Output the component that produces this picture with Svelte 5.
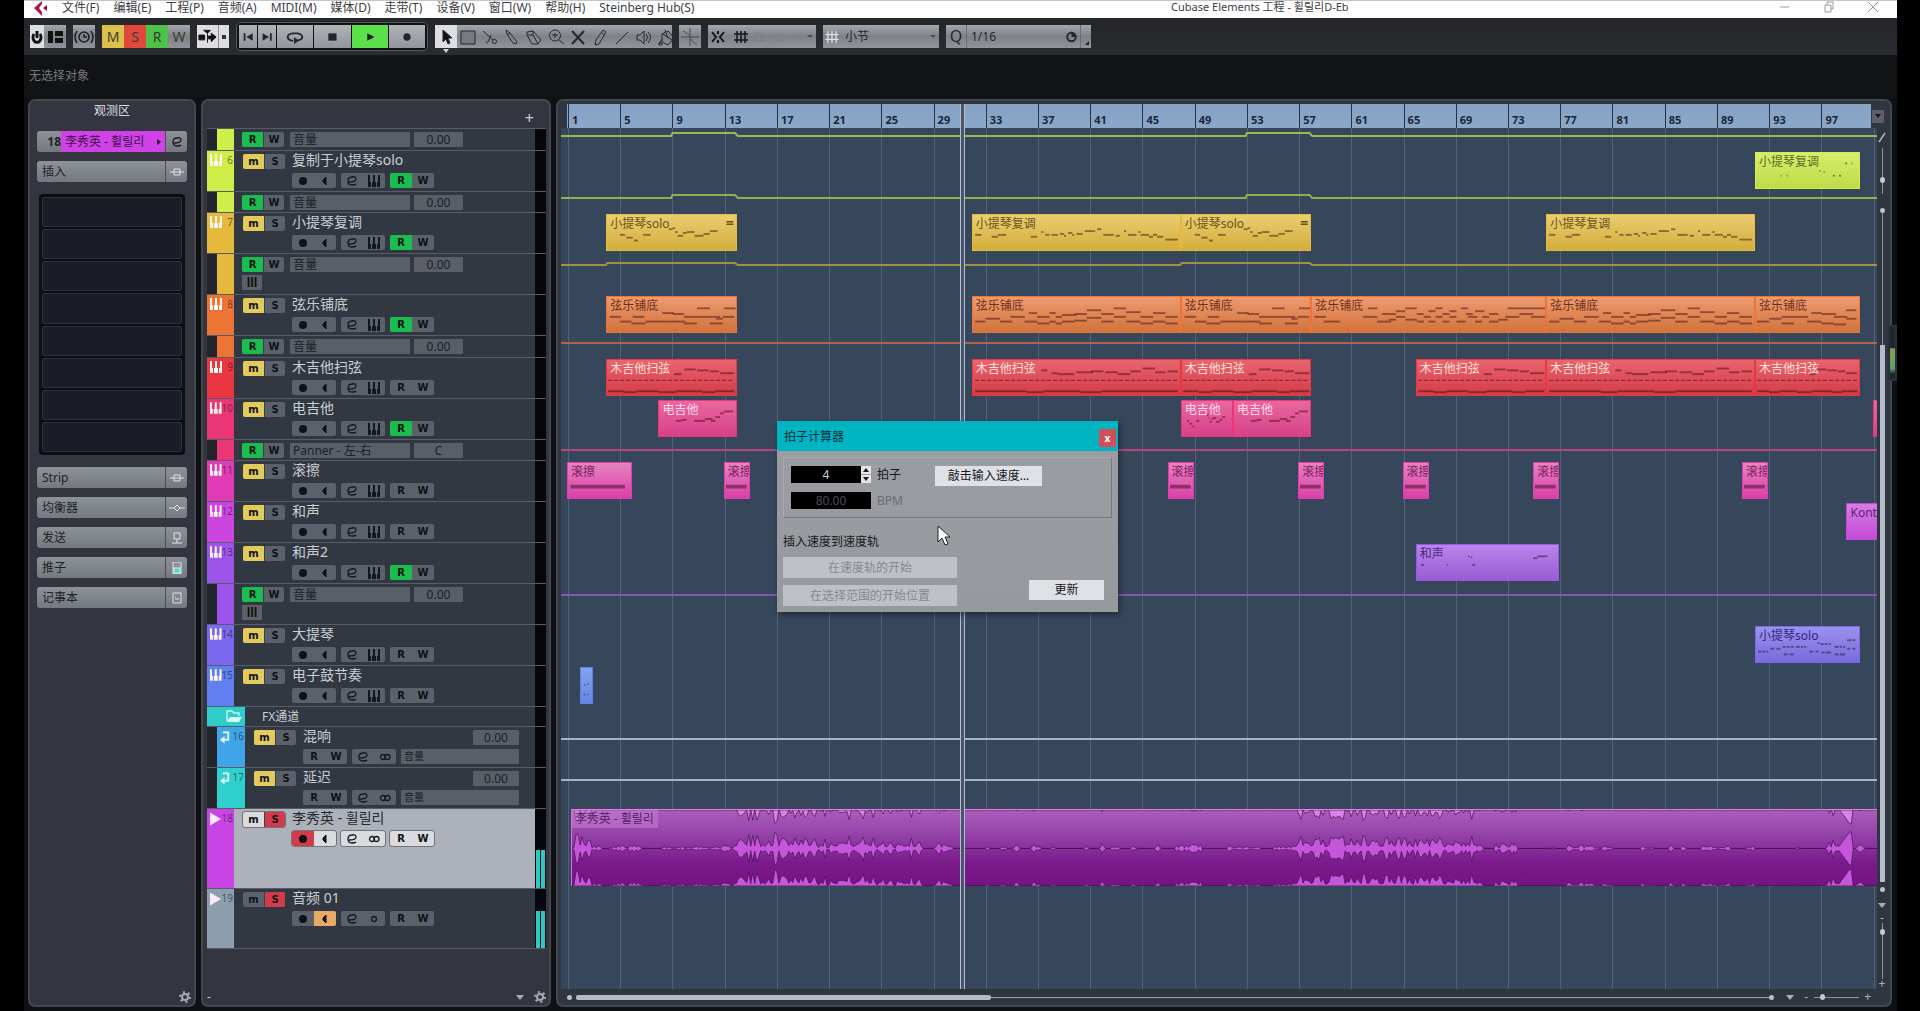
<script lang="ts">
  type Note = [number, number, number]
  type Clip = { from: number; to: number; name: string; notes?: string }
  type Auto = { y: number; color: string; raised?: [number, number][]; lift?: number }
  type Row = {
    kind: 'auto' | 'midi' | 'folder' | 'fx' | 'audio'
    height: number
    color: string
    num?: number
    name?: string
    value?: string
    read?: boolean
    lanes?: boolean
    selected?: boolean
    monitor?: boolean
    stereo?: boolean
    meter?: number
    ink?: string
    tint?: [string, string]
    clips?: Clip[]
    line?: Auto
  }

  const menus = [
    '文件(F)', '编辑(E)', '工程(P)', '音频(A)', 'MIDI(M)', '媒体(D)',
    '走带(T)', '设备(V)', '窗口(W)', '帮助(H)', 'Steinberg Hub(S)',
  ]

  const tools = [
    { id: '选择', d: 'M8 4v12l3-3 2 5 2-1-2-5h4z', fill: true },
    { id: '范围', d: 'M4 5h14v13H4z', fill: false },
    { id: '剪刀', d: 'M4 5l10 9M12 9l-3 7M14 14a2 2 0 1 0 3 3 2 2 0 0 0-3-3M8 15a1 1 0 1 0 1 2', fill: false },
    { id: '胶水', d: 'M5 4l4 3 7 9-1 2-3-1-6-9zM9 7l-3 2', fill: false },
    { id: '橡皮', d: 'M4 6l6-1 8 9-3 4H9L4 9zM4 9h6l5 9M10 9l0-4', fill: false },
    { id: '缩放', d: 'M10 4a5 5 0 1 0 0 11 5 5 0 0 0 0-11M14 14l5 4M10 7v5M7 9h6', fill: false },
    { id: '静音', d: 'M5 5l12 13M17 5L5 18', fill: false },
    { id: '绘制', d: 'M14 4l3 2-7 12-4 1 1-5zM13 7l3 2', fill: false },
    { id: '直线', d: 'M5 18L17 6', fill: false },
    { id: '播放', d: 'M4 9h3l4-4v13l-4-4H4zM13 8q3 3 0 7M15 6q5 5 0 11', fill: false },
    { id: '颜色', d: 'M4 18l3-5M7 8l6-3 6 7-6 7-6-3zM8 8l9 6M10 4l3 8M4 17h3v2H4z', fill: false },
  ]

  const inserts = Array.from({ length: 8 })
  const sections = [
    { name: 'Strip', icon: 'M2 6h4M12 6h4M6 3h6v6H6zM6 6h6' },
    { name: '均衡器', icon: 'M1 6h5M12 6h5M6 6l3-3 3 3-3 3z' },
    { name: '发送', icon: 'M6 1h6v6H6zM9 7v4M4 11h10' },
    { name: '推子', icon: 'fader' },
    { name: '记事本', icon: 'M5 1h8v10H5zM7 7h4M7 5h1' },
  ]

  const patterns: Record<string, Note[]> = {
    solo: [
      [10, 20, 4], [15, 23, 5], [21, 26, 3], [28, 20, 6], [48, 14, 3], [51, 13, 2], [53, 17, 2], [55, 21, 4],
      [59, 18, 3], [62, 17, 6], [68, 21, 7], [75, 19, 5], [80, 16, 6],
    ],
    counter: [
      [1, 20, 3], [9, 22, 3], [12, 20, 4], [28, 22, 3], [33, 17, 1], [35, 20, 2], [38, 20, 3], [42, 19, 2],
      [44, 21, 1], [46, 18, 2], [48, 20, 1], [50, 19, 3], [54, 16, 5], [60, 14, 2], [63, 20, 5], [69, 21, 2],
      [73, 16, 1], [75, 20, 4], [80, 17, 1], [81, 20, 4], [85, 22, 2], [87, 20, 2], [89, 22, 3], [93, 25, 6],
    ],
    stringsA: [
      [2, 20, 9], [10, 25, 9], [19, 27, 11], [20, 20, 9], [30, 25, 20], [43, 16, 9], [51, 17, 9], [60, 20, 28],
      [50, 25, 11], [60, 27, 10], [70, 11, 10], [80, 27, 10], [85, 22, 5], [91, 11, 9], [90, 20, 9],
    ],
    stringsB: [
      [1, 25, 5], [6, 22, 7], [13, 25, 6], [18, 20, 7], [25, 25, 6], [27, 16, 4], [31, 20, 6], [31, 27, 6],
      [37, 16, 3], [37, 25, 3], [40, 20, 3], [40, 27, 3], [43, 25, 6], [43, 18, 7], [49, 24, 6], [49, 17, 6],
      [55, 13, 7], [55, 21, 7], [62, 17, 6], [62, 25, 6], [68, 11, 6], [68, 20, 6], [74, 15, 7], [74, 25, 7],
      [81, 20, 6], [81, 27, 6], [87, 16, 6], [87, 25, 6], [93, 20, 6], [93, 27, 6],
    ],
    stringsC: [
      [1, 20, 5], [5, 25, 7], [22, 20, 6], [24, 11, 4], [28, 25, 6], [30, 17, 6], [33, 23, 3], [36, 14, 4],
      [36, 20, 4], [40, 11, 5], [40, 23, 5], [45, 17, 3], [45, 25, 3], [48, 20, 3], [50, 14, 3], [50, 25, 3],
      [53, 11, 3], [53, 20, 3], [56, 17, 3], [56, 25, 3], [59, 14, 3], [59, 20, 3], [62, 25, 4], [64, 11, 3],
      [66, 17, 3], [67, 20, 4], [70, 14, 4], [70, 25, 3], [73, 20, 3], [76, 17, 4], [76, 25, 4], [80, 23, 4],
      [84, 11, 16], [83, 20, 6], [89, 17, 6], [94, 20, 6],
    ],
    stringsD: [
      [1, 25, 12], [13, 22, 12], [25, 27, 12], [25, 20, 26], [54, 16, 10], [64, 17, 14], [50, 25, 14],
      [64, 27, 12], [76, 20, 13], [76, 28, 12], [88, 13, 10], [88, 22, 10],
    ],
    guitar: [
      [1, 32, 12], [13, 33, 10], [23, 32, 17], [40, 33, 14], [54, 32, 20], [74, 33, 10], [84, 32, 15],
      [52, 14, 6], [60, 9, 9], [70, 10, 9], [80, 11, 7], [88, 13, 11],
    ],
    strum: [
      [1, 32, 25], [26, 33, 8], [34, 32, 18], [52, 33, 10], [62, 32, 37], [33, 10, 3], [38, 13, 3], [41, 14, 8],
      [50, 12, 8], [57, 11, 6], [64, 12, 6], [70, 14, 6], [76, 11, 5], [82, 8, 6], [88, 12, 5], [94, 11, 5],
    ],
    lead: [[22, 20, 8], [30, 19, 6], [46, 20, 14], [60, 18, 10], [68, 20, 6], [74, 16, 6], [80, 12, 5], [85, 10, 12]],
    roll: [[4, 23, 86]],
    sparse: [[24, 23, 1], [30, 23, 1], [62, 18, 1], [66, 19, 1], [75, 23, 2], [81, 23, 2], [87, 10, 2], [93, 10, 1]],
    choir: [[3, 20, 2], [21, 20, 1], [36, 11, 1], [38, 12, 1], [39, 20, 2], [82, 13, 3], [85, 11, 7]],
    cello: [
      [2, 25, 3], [6, 25, 3], [10, 25, 2], [14, 22, 4], [20, 22, 4], [26, 20, 3], [30, 20, 3], [34, 20, 3],
      [39, 20, 4], [44, 20, 2], [47, 20, 2], [27, 28, 4], [33, 28, 4], [52, 25, 4], [58, 25, 3], [60, 16, 2],
      [63, 17, 3], [67, 17, 3], [71, 17, 2], [64, 26, 3], [68, 26, 5], [77, 20, 4], [82, 20, 2], [85, 20, 2],
      [77, 28, 4], [82, 28, 5], [89, 13, 4], [94, 13, 3], [89, 22, 3], [94, 22, 3],
    ],
    drums: [[30, 17, 10], [60, 16, 10], [25, 27, 10], [60, 27, 10]],
    kontakt: [[60, 19, 3]],
  }

  const solo = '小提琴solo'
  const counter = '小提琴复调'
  const strings = '弦乐铺底'
  const strum = '木吉他扫弦'
  const roll = '滚擦'

  const rows: Row[] = [
    {
      kind: 'auto', height: 22, color: '#cfee4a', name: '音量', value: '0.00',
      line: { y: 8, color: '#9db84e', raised: [[9, 14], [53, 58]], lift: 3 },
    },
    {
      kind: 'midi', height: 41, color: '#cfee4a', num: 6, name: '复制于小提琴solo', read: true,
      ink: '#5c6a1c', tint: ['#d6ee70', '#bfdb45'],
      clips: [{ from: 92, to: 100, name: counter, notes: 'sparse' }],
    },
    {
      kind: 'auto', height: 21, color: '#cfee4a', name: '音量', value: '0.00',
      line: { y: 7, color: '#8fb04c', raised: [[9, 14], [53, 58]], lift: 3 },
    },
    {
      kind: 'midi', height: 41, color: '#e5b93c', num: 7, name: counter, read: true,
      ink: '#6b5318', tint: ['#e9cd72', '#d3ae3a'],
      clips: [
        { from: 4, to: 14, name: solo, notes: 'solo' },
        { from: 32, to: 48, name: counter, notes: 'counter' },
        { from: 48, to: 58, name: solo, notes: 'solo' },
        { from: 76, to: 92, name: counter, notes: 'counter' },
      ],
    },
    {
      kind: 'auto', height: 41, color: '#e5b93c', name: '音量', value: '0.00', lanes: true,
      line: { y: 12, color: '#a5904a', raised: [[4, 14], [48, 58]], lift: 2 },
    },
    {
      kind: 'midi', height: 41, color: '#ec7536', num: 8, name: strings, read: true,
      ink: '#6e3212', tint: ['#ee9a72', '#d2733a'],
      clips: [
        { from: 4, to: 14, name: strings, notes: 'stringsA' },
        { from: 32, to: 48, name: strings, notes: 'stringsB' },
        { from: 48, to: 58, name: strings, notes: 'stringsA' },
        { from: 58, to: 76, name: strings, notes: 'stringsC' },
        { from: 76, to: 92, name: strings, notes: 'stringsB' },
        { from: 92, to: 100, name: strings, notes: 'stringsD' },
      ],
    },
    {
      kind: 'auto', height: 22, color: '#ec7536', name: '音量', value: '0.00',
      line: { y: 8, color: '#a8684e' },
    },
    {
      kind: 'midi', height: 41, color: '#ea3640', num: 9, name: strum,
      ink: '#ffe0d8', tint: ['#ea6470', '#d23c46'],
      clips: [
        { from: 4, to: 14, name: strum, notes: 'guitar' },
        { from: 32, to: 48, name: strum, notes: 'strum' },
        { from: 48, to: 58, name: strum, notes: 'guitar' },
        { from: 66, to: 76, name: strum, notes: 'guitar' },
        { from: 76, to: 92, name: strum, notes: 'strum' },
        { from: 92, to: 100, name: strum, notes: 'guitar' },
      ],
    },
    {
      kind: 'midi', height: 41, color: '#ea3674', num: 10, name: '电吉他', read: true,
      ink: '#ffdcec', tint: ['#e8689c', '#d8418a'],
      clips: [
        { from: 8, to: 14, name: '电吉他', notes: 'lead' },
        { from: 48, to: 52, name: '电吉他', notes: 'solo' },
        { from: 52, to: 58, name: '电吉他', notes: 'lead' },
        { from: 101, to: 102, name: '' },
      ],
    },
    {
      kind: 'auto', height: 21, color: '#ea3674', name: 'Panner - 左-右', value: 'C',
      line: { y: 11, color: '#b4487c' },
    },
    {
      kind: 'midi', height: 41, color: '#e23bb6', num: 11, name: roll,
      ink: '#7c2060', tint: ['#e684c0', '#d940a8'],
      clips: [
        { from: 1, to: 6, name: roll, notes: 'roll' },
        { from: 13, to: 15, name: roll, notes: 'roll' },
        { from: 47, to: 49, name: roll, notes: 'roll' },
        { from: 57, to: 59, name: roll, notes: 'roll' },
        { from: 65, to: 67, name: roll, notes: 'roll' },
        { from: 75, to: 77, name: roll, notes: 'roll' },
        { from: 91, to: 93, name: roll, notes: 'roll' },
      ],
    },
    {
      kind: 'midi', height: 41, color: '#cc45de', num: 12, name: '和声',
      ink: '#5e2272', tint: ['#d67ce4', '#c44cd8'],
      clips: [{ from: 99, to: 103, name: 'Kontakt', notes: 'kontakt' }],
    },
    {
      kind: 'midi', height: 41, color: '#9c55e8', num: 13, name: '和声2', read: true,
      ink: '#472678', tint: ['#b985ec', '#985cd4'],
      clips: [{ from: 66, to: 77, name: '和声', notes: 'choir' }],
    },
    {
      kind: 'auto', height: 41, color: '#9c55e8', name: '音量', value: '0.00', lanes: true,
      line: { y: 12, color: '#8058ac' },
    },
    {
      kind: 'midi', height: 41, color: '#7a68ef', num: 14, name: '大提琴',
      ink: '#302880', tint: ['#9a92ee', '#786ade'],
      clips: [{ from: 92, to: 100, name: solo, notes: 'cello' }],
    },
    {
      kind: 'midi', height: 41, color: '#6080f0', num: 15, name: '电子鼓节奏',
      ink: '#2c4490', tint: ['#84a4ee', '#6488e2'],
      clips: [{ from: 2, to: 3, name: '', notes: 'drums' }],
    },
    { kind: 'folder', height: 20, color: '#2ecdc8', name: 'FX通道' },
    { kind: 'fx', height: 41, color: '#40a4e8', num: 16, name: '混响', value: '0.00', line: { y: 13, color: '#a3b6c8' } },
    { kind: 'fx', height: 41, color: '#2fcfcd', num: 17, name: '延迟', value: '0.00', line: { y: 13, color: '#a3b6c8' } },
    {
      kind: 'audio', height: 80, color: '#c944e4', num: 18, name: '李秀英 - 휠릴리',
      selected: true, stereo: true, meter: 38, clips: [],
    },
    { kind: 'audio', height: 60, color: '#8d9fae', num: 19, name: '音频 01', monitor: true, meter: 37 },
  ]

  // The visible timeline is 100.8 bars wide and starts about half a bar before bar 1
  const SPAN = 100.8
  const LEAD = 0.54
  const at = (bar: number) => ((bar - 1 + LEAD) / SPAN) * 100
  const wide = (bars: number) => (bars / SPAN) * 100

  const marks = Array.from({ length: 25 }, (_, i) => 1 + i * 4)
  const gridBars = [...marks, 101]

  function autoPath(line: Auto): string {
    let d = `M0 ${line.y}`
    for (const [from, to] of line.raised ?? []) {
      const a = at(from) * 10
      const b = at(to) * 10
      const up = line.y - (line.lift ?? 0)
      d += `H${a - 1}L${a} ${up}H${b - 2}L${b} ${line.y}`
    }
    return d + 'H1000'
  }

  // Loudness of the vocal take: [from bar, to bar, peak]
  const loud: [number, number, number][] = [
    [1.3, 2.2, 22], [2.2, 2.7, 22], [2.7, 3.5, 5], [4, 6.5, 4], [8, 13.6, 3], [13.6, 16, 14], [16, 20, 18],
    [20, 20.8, 13], [20.8, 21.6, 19], [21.6, 24.5, 13], [24.5, 26, 12], [26, 28, 11], [29, 30.4, 8],
    [32.8, 33.2, 5], [34.1, 34.5, 8], [34.8, 35.6, 4], [36.4, 37.2, 9], [37.9, 38.2, 4], [40.4, 40.8, 6],
    [41.6, 42, 8], [42.6, 43.1, 11], [44.1, 44.5, 9], [45.8, 46.4, 5], [47.4, 49.5, 4], [51.5, 54, 3],
    [55, 56.6, 3], [56.6, 60, 14], [60, 65, 15], [65, 69, 12], [69, 71, 13], [72, 73.6, 6], [76.2, 76.6, 6],
    [77.5, 80, 4], [80.1, 81, 7], [83, 84.1, 3], [85.2, 85.6, 7], [86.2, 86.7, 7], [87.8, 90, 3],
    [91.1, 91.9, 4], [95, 95.4, 3], [97.3, 98.2, 9], [99.6, 100.3, 4],
  ]
  const START = 1.2
  const END = SPAN + 1 - LEAD

  function peaks(): [number, number][] {
    const out: [number, number][] = []
    let seed = 17
    for (let i = 0; i <= 1300; i += 2) {
      const bar = START + ((END - START) * i) / 1300
      seed = (seed * 16807) % 2147483647
      const r = seed / 2147483647
      const part = loud.find(([from, to]) => bar >= from && bar < to)
      let h = 0
      if (part) {
        const [from, to, peak] = part
        const shape = to - from > 1.5 ? 1 : Math.min(1, Math.min(bar - from, to - bar) * 4)
        h = peak * Math.max(0.3, shape) * (0.15 + 0.85 * r * r)
      } else if (bar >= 98.3 && bar < 99.3) {
        h = Math.min(17, (bar - 98.2) * 18)
      }
      out.push([i, Math.round(h * 10) / 10])
    }
    return out
  }
  const wave = peaks()
  const runs = wave.map(([x, h]) => `${x} ${39 - h}`).join('L')
  const back = [...wave].reverse().map(([x, h]) => `${x} ${39 + h}`).join('L')
  const middle = `M${runs}L${back}Z`
  const upper = 'M0 0L' + wave.map(([x, h]) => `${x} ${h - 3}`).join('L') + 'L1300 0Z'
  const lower = 'M0 77L' + wave.map(([x, h]) => `${x} ${77 - h}`).join('L') + 'L1300 77Z'

  let beats = 4
  let bpm = '80.00'
</script>

{#snippet gear()}
  <svg viewBox="0 0 12 12" width="12" height="12" aria-hidden="true">
    <circle cx="6" cy="6" r="3" fill="none" stroke="#a4abb4" stroke-width="2" />
    <circle cx="6" cy="6" r="5" fill="none" stroke="#a4abb4" stroke-width="2" stroke-dasharray="2 3.2" />
  </svg>
{/snippet}

{#snippet keys(color: string)}
  <svg viewBox="0 0 12 12" width="12" height="12" aria-hidden="true">
    <path d="M0 0h2v7h1v5H0zM5 0h2v7h1v5H4V7h1zM10 0h2v12H9V7h1z" fill={color} />
  </svg>
{/snippet}

{#snippet edit()}
  <svg viewBox="0 0 12 12" width="12" height="12" aria-hidden="true">
    <path d="M3 7q7 0 7-3T6 2Q2 2 2 6t4 4q3 0 4-1" fill="none" stroke="#14171c" stroke-width="1.3" />
  </svg>
{/snippet}

<div class="app">
  <header class="menubar">
    <svg class="logo" viewBox="0 0 20 16" width="20" height="16" aria-hidden="true">
      <path d="M10 0L2 7l8 8V11L7 7l3-4z" fill="#b01846" />
      <path d="M15 4v6l-4-3z" fill="#8e1238" />
    </svg>
    <nav>
      {#each menus as item (item)}
        <button>{item}</button>
      {/each}
    </nav>
    <span class="title">Cubase Elements 工程 - 휠릴리D-Eb</span>
    <div class="window">
      <button aria-label="最小化"><svg viewBox="0 0 12 12"><path d="M1 6h9" /></svg></button>
      <button aria-label="还原"><svg viewBox="0 0 12 12"><path d="M2 4h6v7H2zM4 4V1h6v7H8" /></svg></button>
      <button aria-label="关闭"><svg viewBox="0 0 12 12"><path d="M1 1l10 10M11 1L1 11" /></svg></button>
    </div>
  </header>

  <div class="toolbar">
    <div class="group setup">
      <button class="lit" aria-label="激活工程">
        <svg viewBox="0 0 14 22"><path d="M4 8a4 5 0 1 0 6 0M7 5v7" stroke="#111" stroke-width="3" fill="none" /></svg>
      </button>
      <button aria-label="窗口布局">
        <svg viewBox="0 0 22 22"><path d="M4 5h5v12H4zM11 5h8v5h-8zM11 12h8v5h-8z" fill="#111" /></svg>
      </button>
    </div>
    <div class="group">
      <button class="single" aria-label="延迟补偿">
        <svg viewBox="0 0 22 22" fill="none" stroke="#1c1e22" stroke-width="1.5">
          <circle cx="11" cy="11" r="5" /><path d="M11 8v3h3M4 5q-4 6 0 12M18 5q4 6 0 12" />
        </svg>
      </button>
    </div>
    <div class="group states">
      <button class="m">M</button>
      <button class="s">S</button>
      <button class="r">R</button>
      <button>W</button>
    </div>
    <div class="group scroll">
      <button class="lit" aria-label="自动滚屏">
        <svg viewBox="0 0 22 22"><path d="M2 9h6v5H2zM7 4h7l-3 3zM11 7v10M12 10h3V7l5 4-5 5v-3h-3z" fill="#111" stroke="#111" /></svg>
      </button>
      <button class="lit" aria-label="滚屏设置"><svg viewBox="0 0 10 22"><path d="M3 9h4v4H3z" fill="#333" /></svg></button>
    </div>
    <div class="transport">
      <button class="step" aria-label="上一标记"><svg viewBox="0 0 18 22"><path d="M4 7h2v8H4zM14 7v8l-7-4z" /></svg></button>
      <button class="step" aria-label="下一标记"><svg viewBox="0 0 18 22"><path d="M4 7l7 4-7 4zM12 7h2v8h-2z" /></svg></button>
      <button aria-label="循环">
        <svg viewBox="0 0 22 22"><path d="M9 15H7Q3 14 3 11t5-4h6q5 1 5 4t-6 4" fill="none" stroke="#22252a" stroke-width="2" /><path d="M10 11l5 4-5 4z" /></svg>
      </button>
      <button aria-label="停止"><svg viewBox="0 0 22 22"><path d="M7 7h9v8H7z" /></svg></button>
      <button class="on" aria-label="播放"><svg viewBox="0 0 22 22"><path d="M8 7l8 4-8 4z" /></svg></button>
      <button aria-label="录音"><svg viewBox="0 0 22 22"><circle cx="11" cy="11" r="4" /></svg></button>
    </div>
    <div class="group tools">
      {#each tools as tool, i (tool.id)}
        <button class:lit={i === 0} aria-label={tool.id}>
          <svg viewBox="0 0 22 22">
            <path d={tool.d} fill={tool.fill ? '#111' : i === 1 ? '#777a82' : 'none'} stroke="#26282d" stroke-width={i === 6 ? 2 : 1} />
          </svg>
        </button>
      {/each}
    </div>
    <div class="group">
      <button class="single" aria-label="吸附过零点">
        <svg viewBox="0 0 22 22"><path d="M2 11h18M11 2v18M4 5q7 3 7 6t7 8" fill="none" stroke="#4b4e55" /></svg>
      </button>
    </div>
    <div class="group snap">
      <button aria-label="吸附"><svg viewBox="0 0 22 22"><path d="M4 6l4 5-4 5M16 6l-4 5 4 5M10 5v3M10 14v3" fill="none" stroke="#15171b" stroke-width="2" /></svg></button>
      <button aria-label="网格"><svg viewBox="0 0 22 22"><path d="M7 5v12M11 5v12M15 5v12M4 8h14M4 14h14" fill="none" stroke="#15171b" stroke-width="1.5" /></svg></button>
      <svg class="ghost" viewBox="0 0 60 22" aria-hidden="true">
        <path d="M4 7h8v8H4zM2 15h12M22 9h12v5H22zM25 15h8M42 13h5V8h6v6h-3" />
      </svg>
      <span class="arrow"></span>
    </div>
    <div class="group gridtype">
      <svg viewBox="0 0 22 22" width="18" height="18" aria-hidden="true"><path d="M6 4v14M11 4v14M16 4v14M3 8h16M3 14h16" fill="none" stroke="#dfe2e8" stroke-width="1.5" /></svg>
      <button class="grow">小节</button>
      <span class="arrow"></span>
    </div>
    <div class="group quantize">
      <span class="q">Q</span>
      <button class="grow">1/16</button>
      <button class="apply" aria-label="量化设置">
        <svg viewBox="0 0 18 22"><circle cx="9" cy="11" r="4.5" fill="none" stroke="#26282d" stroke-width="2" /><path d="M9 5l6 6H9z" fill="#26282d" /></svg>
      </button>
      <span class="corner"></span>
    </div>
  </div>

  <div class="info">无选择对象</div>

  <main>
    <aside class="panel inspector">
      <h2>观测区</h2>
      <div class="strip track">
        <span class="no">18</span>
        <button class="who">李秀英 - 휠릴리<span class="caret"></span></button>
        <button class="side" aria-label="编辑通道">{@render edit()}</button>
      </div>
      <div class="strip">
        <button class="label">插入</button>
        <button class="side" aria-label="旁通插入"><svg viewBox="0 0 18 12"><path d={sections[0].icon} /></svg></button>
      </div>
      <div class="rack">
        {#each inserts as _}
          <div class="slot"></div>
        {/each}
      </div>
      <div class="sections">
        {#each sections as s (s.name)}
          <div class="strip">
            <button class="label">{s.name}</button>
            <button class="side" aria-label="{s.name}旁通">
              <svg viewBox="0 0 18 12">
                {#if s.icon === 'fader'}
                  <rect x="5" y="0" width="8" height="12" fill="#8f949b" stroke="#e6e8ec" />
                  <rect x="6" y="6" width="6" height="5" fill="#3fe0cc" />
                {:else}
                  <path d={s.icon} />
                {/if}
              </svg>
            </button>
          </div>
        {/each}
      </div>
      <footer><span></span><button aria-label="观测区设置">{@render gear()}</button></footer>
    </aside>

    <section class="panel tracks">
      <header><button aria-label="添加轨道">+</button></header>
      <div class="list">
        {#each rows as row, i (i)}
          <div class="row {row.kind}" class:selected={row.selected} style:height="{row.height}px">
            <div class="stripe" style:background={row.color}>
              {#if row.kind === 'midi'}
                {@render keys('#fff4ee')}
              {:else if row.kind === 'folder'}
                <svg viewBox="0 0 18 14" width="18" height="14" aria-hidden="true">
                  <path d="M2 12V2h5l2 2h5v3" fill="none" stroke="#bff5f0" stroke-width="1.5" />
                  <path d="M2 12l3-4h12l-3 5H3z" fill="#d8faf6" />
                </svg>
              {:else if row.kind === 'fx'}
                <svg viewBox="0 0 12 14" width="11" height="14" aria-hidden="true">
                  <path d="M3 2h6v8H4" fill="none" stroke="#e6fbff" stroke-width="2" /><path d="M5 6v8l-5-4z" fill="#e6fbff" />
                </svg>
              {:else if row.kind === 'audio'}
                <svg viewBox="0 0 12 14" width="11" height="14" aria-hidden="true">
                  <path d="M0 0l12 7-12 7z" fill="#fbe9ff" />
                </svg>
              {/if}
              {#if row.num}<span>{row.num}</span>{/if}
            </div>

            <div class="body">
              {#if row.kind === 'auto'}
                <div class="line">
                  <div class="pair"><button class="green">R</button><button>W</button></div>
                  <button class="param">{row.name}</button>
                  <button class="value">{row.value}</button>
                </div>
                {#if row.lanes}
                  <button class="lanes" aria-label="显示编组">lll</button>
                {/if}
              {:else if row.kind === 'folder'}
                <span class="folder-name">{row.name}</span>
              {:else}
                <div class="line">
                  <div class="pair">
                    <button class:yellow={row.kind !== 'audio'}>m</button>
                    <button class:red={row.kind === 'audio'}>S</button>
                  </div>
                  <span class="name">{row.name}</span>
                  {#if row.kind === 'fx'}<button class="value">{row.value}</button>{/if}
                </div>
                <div class="controls">
                  {#if row.kind !== 'fx'}
                    <div class="pair">
                      <button class:red={row.selected} aria-label="录音准备">
                        <svg viewBox="0 0 10 10" width="10" height="10"><circle cx="5" cy="5" r="4" fill="#0f1115" /></svg>
                      </button>
                      <button class:orange={row.monitor} aria-label="监听">
                        <svg viewBox="0 0 10 10" width="10" height="10"><path d="M3 4l3-3v8L3 6z" fill="#0f1115" stroke="#0f1115" /></svg>
                      </button>
                    </div>
                  {:else}
                    <div class="pair"><button>R</button><button>W</button></div>
                  {/if}
                  <div class="pair">
                    <button aria-label="编辑">{@render edit()}</button>
                    <button aria-label="通道">
                      {#if row.kind === 'midi'}
                        {@render keys('#14171c')}
                      {:else}
                        <svg viewBox="0 0 12 10" width="12" height="10" fill="none" stroke="#14171c" stroke-width="1.3">
                          {#if row.monitor}
                            <circle cx="6" cy="5" r="2.5" />
                          {:else}
                            <circle cx="4" cy="5" r="2.5" /><circle cx="8.5" cy="5" r="2.5" />
                          {/if}
                        </svg>
                      {/if}
                    </button>
                  </div>
                  {#if row.kind !== 'fx'}
                    <div class="pair"><button class:green={row.read}>R</button><button>W</button></div>
                  {:else}
                    <button class="param send">音量</button>
                  {/if}
                </div>
              {/if}
            </div>
            <div class="meter">
              {#if row.meter}
                <i style:height="{row.meter}px"></i><i style:height="{row.meter}px"></i>
              {/if}
            </div>
          </div>
        {/each}
      </div>
      <footer>
        <span>-</span>
        <div><i class="down"></i><button aria-label="轨道控制设置">{@render gear()}</button></div>
      </footer>
    </section>

    <section class="panel arrange">
      <div class="ruler">
        {#each marks as bar (bar)}
          <span class="mark" style:left="{at(bar)}%">{bar}</span>
        {/each}
        <i class="locator" style:left="{at(31.18)}%"></i>
      </div>
      <div class="rulermenu"><button aria-label="标尺格式"><i class="down"></i></button></div>

      <div class="canvas">
        {#each gridBars as bar (bar)}
          <i class="gridline" style:left="{at(bar)}%"></i>
        {/each}
        {#each rows as row, i (i)}
          <div class="lane" style:height="{row.height}px">
            {#if row.line}
              <svg class="automation" viewBox="0 0 1000 {row.height}" preserveAspectRatio="none" aria-hidden="true">
                <path d={autoPath(row.line)} stroke={row.line.color} />
              </svg>
            {/if}
            {#each row.clips ?? [] as clip}
              <div
                class="clip"
                style:left="{at(clip.from)}%"
                style:width="{wide(clip.to - clip.from)}%"
                style:color={row.ink}
                style:background="linear-gradient({row.tint?.[0]}, {row.tint?.[1]})"
                style:border-color={row.color}
              >
                {#if clip.notes}
                  <svg viewBox="0 0 100 37" preserveAspectRatio="none" aria-hidden="true">
                    {#each patterns[clip.notes] as [x, y, w]}
                      <rect {x} {y} width={w} height={clip.notes === 'roll' ? 4 : 2} />
                    {/each}
                    {#if row.num === 9}
                      <path d="M1 21.5H99" />
                    {/if}
                  </svg>
                {/if}
                <span>{clip.name}</span>
                {#if row.num === 7 && clip.name === solo}<b>=</b>{/if}
              </div>
            {/each}
            {#if row.selected}
              <div class="take" style:left="{at(START)}%">
                <svg viewBox="0 0 1300 77" preserveAspectRatio="none" aria-hidden="true">
                  <path d={upper} class="top" />
                  <path d={middle} />
                  <path d={lower} />
                </svg>
                <span>李秀英 - 휠릴리</span>
              </div>
            {/if}
          </div>
        {/each}
        <i class="locator" style:left="{at(31.18)}%"></i>
      </div>

      <div class="vscroll">
        <svg viewBox="0 0 10 20" width="10" height="20" aria-hidden="true"><path d="M2 14l6-9" stroke="#aab2bc" stroke-width="1.5" /></svg>
        <div class="zoomline"><i></i></div>
        <b></b>
        <div class="thin"></div>
        <div class="thumb"></div>
        <b></b>
        <i class="down"></i>
        <span>-</span>
        <div class="zoomline low"><i></i></div>
        <span>+</span>
      </div>
      <div class="hscroll">
        <b></b>
        <div class="thumb"></div>
        <div class="thin"></div>
        <b></b>
        <i class="down"></i>
        <span>-</span>
        <div class="zoomline"><i></i></div>
        <span>+</span>
      </div>
    </section>
  </main>

  <div class="edge" aria-hidden="true"></div>

  <div class="dialog" role="dialog" aria-label="拍子计算器">
    <header>
      <h3>拍子计算器</h3>
      <button aria-label="关闭拍子计算器">x</button>
    </header>
    <div class="content">
      <div class="calc">
        <div class="fields">
          <div class="spin">
            <input id="beats" bind:value={beats} />
            <div>
              <button aria-label="增加" on:click={() => beats++}><i class="up"></i></button>
              <button aria-label="减少" on:click={() => beats--}><i class="down"></i></button>
            </div>
          </div>
          <label for="beats">拍子</label>
          <input id="bpm" bind:value={bpm} disabled />
          <label for="bpm" class="dim">BPM</label>
        </div>
        <button class="tap">敲击输入速度...</button>
      </div>
      <p>插入速度到速度轨</p>
      <div class="actions">
        <div>
          <button disabled>在速度轨的开始</button>
          <button disabled>在选择范围的开始位置</button>
        </div>
        <button class="refresh">更新</button>
      </div>
    </div>
    <svg class="cursor" viewBox="0 0 14 21" width="14" height="21" aria-hidden="true">
      <path d="M1 1v16l4-4 3 7 3-1-3-7h5z" fill="#fff" stroke="#222" />
    </svg>
  </div>
</div>

<style>
  :global(body) {
    margin: 0;
    background: #000;
  }
  .app {
    position: relative;
    display: flex;
    flex-direction: column;
    min-height: 100vh;
    margin: 0 23px 0 24px;
    background: #0f1115;
    color: #c9ced5;
    font: 12px/16px 'Noto Sans', 'Noto Sans CJK SC', 'Noto Sans CJK KR', sans-serif;
  }
  .app,
  .app *,
  .app *::before {
    box-sizing: border-box;
  }
  button {
    display: flex;
    align-items: center;
    justify-content: center;
    margin: 0;
    padding: 0;
    border: 0;
    background: none;
    color: inherit;
    font: inherit;
    white-space: nowrap;
  }
  h2,
  h3,
  p {
    margin: 0;
    font-size: 12px;
    font-weight: 400;
  }
  .down,
  .up,
  .arrow {
    border: 4px solid transparent;
    border-top: 5px solid #a9b0b9;
    border-bottom: 0;
  }

  /* menu bar */
  .menubar {
    display: flex;
    height: 18px;
    background: #fff;
    border-top: 1px solid #c4c4c8;
    color: #3c3e42;
    line-height: 13px;
  }
  .logo {
    margin: 0 10px 0 8px;
  }
  nav {
    display: flex;
    gap: 14px;
    align-items: flex-start;
    width: 1109px;
  }
  .title {
    flex: 1;
    font-size: 11px;
    line-height: 12px;
    white-space: nowrap;
  }
  .window {
    display: flex;
    gap: 32px;
    margin-right: 18px;
  }
  .window button {
    height: 12px;
  }
  .window svg {
    width: 12px;
    height: 12px;
    fill: none;
    stroke: #9a9ca0;
  }

  /* toolbar */
  .toolbar {
    display: flex;
    align-items: center;
    gap: 7px;
    height: 37px;
    padding: 0 6px;
    background: linear-gradient(#25262a, #2a2c31);
  }
  .group {
    display: flex;
    align-items: stretch;
    height: 23px;
    background: linear-gradient(#a3a6ac, #7e8188 50%, #91949b);
    color: #26282d;
  }
  .group svg {
    display: block;
    height: 22px;
  }
  .lit {
    background: #dcdee4;
  }
  .setup {
    width: 36px;
  }
  .setup .lit {
    width: 14px;
  }
  .single {
    width: 22px;
  }
  .states {
    color: #3a3c30;
    font-size: 14px;
  }
  .states button {
    width: 22px;
  }
  .m {
    background: #dcc04c;
  }
  .s {
    background: #e0483e;
  }
  .r {
    background: #4cc24a;
  }
  .scroll button:first-child {
    width: 22px;
    border-right: 1px solid #8b8d93;
  }
  .scroll button:last-child {
    width: 10px;
  }
  .transport {
    display: flex;
    gap: 1px;
    width: 192px;
    height: 29px;
    padding: 2px;
    border: 1px solid #565a60;
    border-radius: 5px;
    background: #101216;
  }
  .transport button {
    flex: 1;
    background: linear-gradient(#b0b4b9, #92969c);
  }
  .transport .step {
    flex: 0 0 18px;
  }
  .transport .on {
    background: #5be04c;
  }
  .transport svg {
    height: 20px;
    fill: #22252a;
  }
  .tools {
    width: 237px;
  }
  .tools button {
    flex: 1;
  }
  .tools .lit {
    position: relative;
  }
  .tools .lit::after {
    content: '';
    position: absolute;
    top: 24px;
    border: 3px solid transparent;
    border-top: 4px solid #cfd2d8;
    border-bottom: 0;
  }
  .snap {
    width: 108px;
    align-items: center;
  }
  .snap button {
    width: 22px;
  }
  .snap .ghost {
    flex: 1;
    fill: none;
    stroke: #7e8188;
  }
  .group .arrow {
    margin-right: 3px;
    border-width: 3px 3px 0;
    border-top-color: #4a4d54;
  }
  .gridtype {
    width: 116px;
    align-items: center;
  }
  .grow {
    flex: 1;
    justify-content: flex-start;
    padding-left: 4px;
  }
  .quantize {
    width: 145px;
  }
  .q {
    width: 21px;
    border-right: 1px solid #6b6e75;
    font-size: 16px;
    line-height: 22px;
    text-align: center;
  }
  .apply {
    width: 18px;
    border-right: 1px solid #6b6e75;
  }
  .corner {
    align-self: flex-end;
    margin: 0 2px 3px 4px;
    border: 2px solid #1c1e22;
    border-top-color: transparent;
    border-left-color: transparent;
  }
  .info {
    height: 44px;
    padding: 13px 5px;
    background: #121315;
    color: #767a80;
  }

  main {
    flex: 1;
    display: grid;
    grid-template-columns: 168px 350px minmax(0, 1fr);
    gap: 5px;
    padding: 0 5px 4px 4px;
  }
  .panel {
    display: flex;
    flex-direction: column;
    border: 2px solid #43474f;
    border-radius: 7px;
    background: #33363f;
  }
  .panel > footer {
    display: flex;
    justify-content: space-between;
    align-items: center;
    height: 16px;
    margin-top: auto;
  }
  .panel > footer div {
    display: flex;
    align-items: center;
    gap: 10px;
  }

  /* inspector */
  .inspector {
    padding: 0 7px;
  }
  .inspector h2 {
    height: 30px;
    padding-top: 2px;
    text-align: center;
    color: #d9dde2;
  }
  .inspector footer {
    margin-right: -4px;
  }
  .strip {
    display: flex;
    flex: none;
    height: 21px;
    border-radius: 3px;
    overflow: hidden;
    background: linear-gradient(#8d9198, #74787f);
    color: #1f2227;
  }
  .strip.track {
    margin-bottom: 9px;
  }
  .no {
    width: 24px;
    font-weight: 700;
    line-height: 21px;
    text-align: right;
  }
  .who {
    flex: 1;
    justify-content: space-between;
    padding: 0 4px;
    background: #cf42e6;
    color: #3d0f4c;
  }
  .caret {
    border: 3px solid transparent;
    border-left: 4px solid #2a0836;
    border-right: 0;
  }
  .side {
    width: 22px;
    border-left: 1px solid #4b4e55;
  }
  .side svg {
    width: 18px;
    height: 12px;
    fill: none;
    stroke: #e2e5e9;
  }
  .label {
    flex: 1;
    justify-content: flex-start;
    padding-left: 5px;
  }
  .rack {
    display: flex;
    flex: none;
    flex-direction: column;
    gap: 2px;
    height: 261px;
    margin: 12px 2px;
    padding: 3px;
    border-radius: 4px;
    background: #0c0e13;
  }
  .slot {
    flex: 1;
    border: 1px solid #2c3038;
    border-radius: 2px;
    background: #1a1d25;
  }
  .sections {
    display: flex;
    flex-direction: column;
    gap: 9px;
  }

  /* track list */
  .tracks {
    padding: 0 3px 0 4px;
  }
  .tracks > header {
    display: flex;
    justify-content: flex-end;
    height: 27px;
    padding: 6px 12px 0 0;
    font-size: 16px;
  }
  .row {
    display: flex;
    border-top: 1px solid #565d68;
    background: #323841;
  }
  .list {
    border-bottom: 1px solid #565d68;
  }
  .row.selected {
    background: #adb1b9;
    color: #26292e;
  }
  .stripe {
    display: flex;
    align-items: flex-start;
    justify-content: space-between;
    width: 27px;
    padding: 3px 1px 0 3px;
    color: rgba(30, 20, 30, 0.6);
    font-size: 10px;
    line-height: 12px;
  }
  .auto .stripe {
    width: 17px;
    margin-left: 10px;
  }
  .auto,
  .fx {
    background: linear-gradient(90deg, #22252b 10px, #323841 10px);
  }
  .fx .stripe {
    width: 28px;
    margin-left: 10px;
  }
  .folder .stripe {
    width: 38px;
    padding: 2px;
    justify-content: flex-end;
  }
  .body {
    flex: 1;
    padding: 3px 0 0 9px;
  }
  .line {
    display: flex;
    gap: 7px;
    height: 15px;
    margin-bottom: 4px;
  }
  .pair {
    display: flex;
    height: 15px;
    border-radius: 2px;
    overflow: hidden;
    background: #5b616a;
    color: #0f1115;
    font: 700 10px/15px 'DejaVu Sans', sans-serif;
  }
  .pair button {
    width: 21px;
  }
  .line .pair button + button {
    border-left: 1px solid #3c4149;
  }
  .green {
    background: #1cbd50;
  }
  .yellow {
    background: #e2cb5c;
  }
  .red {
    background: #d03c4c;
  }
  .orange {
    background: #e8a866;
  }
  .selected .pair {
    outline: 1px solid #70747b;
    background: #d9dbdf;
  }
  .selected .red {
    background: #d03c4c;
  }
  .name {
    font-size: 14px;
    line-height: 12px;
    white-space: nowrap;
  }
  .controls {
    display: flex;
    gap: 5px;
    margin-left: 49px;
  }
  .controls .pair {
    width: 44px;
  }
  .controls .pair button {
    width: 22px;
  }
  .param,
  .value {
    height: 15px;
    background: #595e67;
    color: #1b1e23;
    line-height: 15px;
    border-radius: 1px;
  }
  .param {
    justify-content: flex-start;
    width: 120px;
    padding-left: 3px;
  }
  .auto .body {
    padding-left: 8px;
  }
  .auto .line {
    gap: 4px;
    margin-bottom: 3px;
  }
  .auto .param {
    margin-left: 2px;
  }
  .value {
    width: 49px;
  }
  .fx .value {
    width: 46px;
    margin: 0 16px 0 auto;
  }
  .send {
    width: 118px;
    font-size: 10px;
  }
  .lanes {
    width: 20px;
    height: 15px;
    background: #5b616a;
    color: #111;
    font-weight: 700;
  }
  .folder .body {
    padding: 2px 0 0 17px;
  }
  .meter {
    display: flex;
    align-items: flex-end;
    justify-content: center;
    gap: 1px;
    width: 11px;
    background: #05070c;
  }
  .meter i {
    width: 4px;
    background: #2fc9c4;
  }

  /* arrangement */
  .arrange {
    display: grid;
    grid-template: 24px minmax(861px, 1fr) 16px / minmax(0, 1fr) 10px;
    padding: 3px 3px 0;
    background: #2f3640;
  }
  .ruler {
    position: relative;
  }
  .ruler::before {
    content: '';
    position: absolute;
    inset: 0 6px 0 6px;
    background: linear-gradient(#86a2c2, #8ba8c8);
  }
  .mark {
    position: absolute;
    top: 0;
    height: 24px;
    padding: 8px 0 0 3px;
    border-left: 1px solid #22344c;
    color: #18273c;
    font-size: 11px;
    font-weight: 700;
  }
  .locator {
    position: absolute;
    z-index: 2;
    top: 0;
    bottom: 0;
    width: 5px;
    margin-left: -2px;
    border: solid #b4bccd;
    border-width: 0 1px;
    background: #4a5670;
  }
  .rulermenu {
    display: flex;
    align-items: center;
  }
  .rulermenu button {
    width: 12px;
    height: 13px;
    margin-left: -5px;
    position: relative;
    background: #5e5d68;
  }
  .rulermenu .down {
    border-width: 4px 3px 0;
    border-top-color: #15171c;
  }
  .canvas {
    position: relative;
    overflow: hidden;
    background: #36475c;
  }
  .gridline {
    position: absolute;
    top: 0;
    bottom: 0;
    width: 1px;
    background: #506378;
  }
  .lane {
    position: relative;
  }
  .automation {
    position: absolute;
    width: 100%;
    height: 100%;
  }
  .automation path {
    fill: none;
    stroke-width: 2;
    vector-effect: non-scaling-stroke;
  }
  .clip {
    position: absolute;
    top: 2px;
    height: 37px;
    margin-left: -1px;
    padding: 1px 0 0 3px;
    border: 1px solid;
    overflow: hidden;
    white-space: nowrap;
  }
  .clip span {
    position: relative;
  }
  .clip svg {
    position: absolute;
    left: 0;
    top: 0;
    width: 100%;
    height: 100%;
    fill: rgba(60, 10, 20, 0.48);
  }
  .clip path {
    fill: none;
    stroke: rgba(90, 10, 20, 0.7);
    stroke-dasharray: 4 2;
    vector-effect: non-scaling-stroke;
  }
  .clip b {
    position: absolute;
    top: 0;
    right: 2px;
    font-size: 14px;
  }
  .take {
    position: absolute;
    top: 1px;
    right: 0;
    height: 77px;
    border-top: 1px solid #ee7af0;
    border-left: 1px solid #e067ee;
    background: linear-gradient(#a95eba, #8f3ba2 40%, #7a1a8c 70%, #781283);
  }
  .take svg {
    position: absolute;
    width: 100%;
    height: 100%;
  }
  .take path {
    fill: #c556dc;
    stroke: #42164e;
    stroke-width: 1;
    stroke-opacity: 0.7;
    vector-effect: non-scaling-stroke;
  }
  .take .top {
    fill: #dc82e6;
  }
  .take span {
    position: relative;
    display: block;
    width: 86px;
    height: 18px;
    padding-left: 3px;
    background: rgba(200, 130, 215, 0.5);
    color: #57206a;
    line-height: 18px;
    white-space: nowrap;
  }
  .vscroll {
    display: flex;
    flex-direction: column;
    align-items: center;
    color: #a9b0b9;
    line-height: 10px;
  }
  .vscroll b,
  .hscroll b {
    flex: none;
    width: 5px;
    height: 5px;
    border-radius: 50%;
    background: #b9c0ca;
  }
  .zoomline {
    display: flex;
    align-items: center;
    justify-content: center;
    flex: none;
    width: 1px;
    height: 46px;
    margin-bottom: 14px;
    background: #8a929d;
  }
  .vscroll .zoomline {
    padding-top: 18px;
  }
  .zoomline i {
    flex: none;
    width: 5px;
    height: 6px;
    border-radius: 50%;
    background: #c3cad3;
  }
  .vscroll .thin {
    width: 1px;
    height: 132px;
    background: #8a929d;
  }
  .vscroll .thumb {
    flex: 1;
    width: 5px;
    margin-bottom: 5px;
    background: #b4bbc8;
  }
  .vscroll .down {
    margin: 11px 0 5px;
  }
  .vscroll .low {
    align-items: flex-start;
    height: 56px;
    margin: 0;
    padding-top: 6px;
  }
  .hscroll {
    display: flex;
    align-items: center;
    grid-column: 1 / -1;
    padding: 0 16px 0 6px;
    color: #a9b0b9;
  }
  .hscroll .thumb {
    flex: 416;
    height: 5px;
    margin-left: 4px;
    border-radius: 2px;
    background: #b4bbc8;
  }
  .hscroll .thin {
    flex: 780;
    height: 1px;
    background: #9aa2ad;
  }
  .hscroll .down {
    margin: 0 10px 0 12px;
  }
  .hscroll .zoomline {
    justify-content: flex-start;
    width: 45px;
    height: 1px;
    margin: 0 5px 0 6px;
    padding-left: 6px;
  }
  .edge {
    position: absolute;
    top: 325px;
    right: 0;
    width: 9px;
    height: 56px;
    border: 2px solid #2a3038;
    background: linear-gradient(#22262c 40%, #8aa04a 42%, #5f9c70 80%, #22262c 90%);
  }

  /* beat calculator */
  .dialog {
    position: absolute;
    z-index: 3;
    top: 421px;
    left: 753px;
    width: 341px;
    height: 191px;
    background: linear-gradient(#9b9da2, #96999e);
    box-shadow: 2px 3px 6px rgba(0, 0, 0, 0.4);
    color: #16181c;
  }
  .dialog > header {
    display: flex;
    justify-content: space-between;
    height: 30px;
    padding: 8px 2px 0 7px;
    background: #00b4c2;
  }
  .dialog h3 {
    color: #0c2c3c;
  }
  .dialog > header button {
    width: 17px;
    height: 18px;
    background: #d24e58;
    color: #fff;
    font-weight: 700;
    font-size: 10px;
  }
  .content {
    padding: 6px 6px 0;
  }
  .calc {
    display: flex;
    gap: 17px;
    align-items: flex-start;
    height: 61px;
    padding: 8px 7px 0;
    border: 1px solid;
    border-color: #a9acb0 #777a80 #777a80 #a9acb0;
  }
  .fields {
    display: grid;
    grid-template-columns: 80px auto;
    column-gap: 6px;
    row-gap: 9px;
    width: 127px;
    line-height: 17px;
  }
  .spin {
    display: flex;
  }
  .spin > div {
    display: flex;
    flex-direction: column;
    gap: 1px;
  }
  .spin button {
    width: 10px;
    height: 8px;
    background: #e3e5e9;
  }
  .spin .down,
  .spin .up {
    border-width: 4px 3px 0;
    border-top-color: #16181c;
  }
  .spin .up {
    transform: rotate(180deg);
  }
  input {
    width: 80px;
    height: 17px;
    padding: 0;
    border: 0;
    background: #000;
    color: #c9ccd0;
    font: inherit;
    text-align: center;
  }
  .spin input {
    width: 70px;
  }
  input:disabled {
    color: #4a4c50;
  }
  .dim {
    color: #6b6e73;
  }
  .tap,
  .refresh {
    background: #dfe1e6;
  }
  .tap {
    width: 107px;
    height: 20px;
  }
  .content p {
    padding: 16px 0 7px;
  }
  .actions {
    display: flex;
    justify-content: space-between;
    align-items: flex-end;
  }
  .actions > div {
    display: flex;
    flex-direction: column;
    gap: 7px;
  }
  .actions button:disabled {
    width: 174px;
    height: 21px;
    background: #bfc1c6;
    color: #85888e;
  }
  .refresh {
    width: 75px;
    height: 20px;
    margin: 0 8px 6px 0;
  }
  .cursor {
    position: absolute;
    left: 160px;
    top: 104px;
  }
</style>
